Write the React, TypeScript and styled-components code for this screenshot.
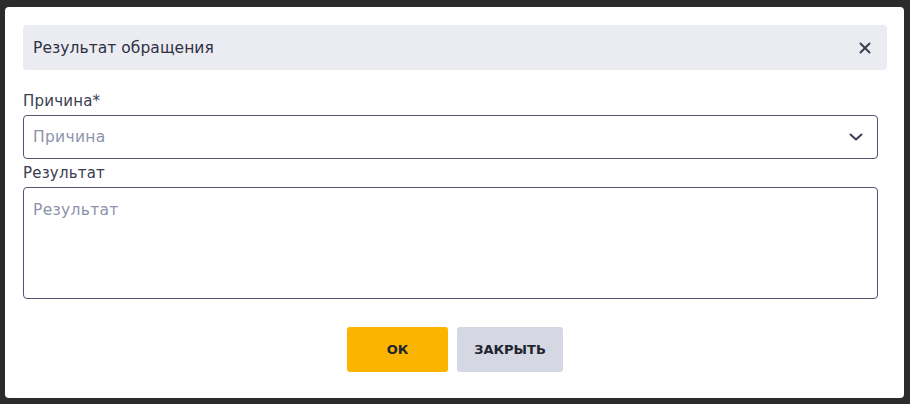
import React from "react";
import styled, { createGlobalStyle } from "styled-components";

const GlobalStyle = createGlobalStyle`
  html, body {
    margin: 0;
    padding: 0;
    background: #2b2b2b;
    font-family: "DejaVu Sans", "Noto Sans", sans-serif;
  }
  * {
    box-sizing: border-box;
  }
`;

function CloseIcon() {
  return (
    <svg width="12" height="12" viewBox="0 0 12 12" fill="none">
      <path d="M1.5 1.5L10.5 10.5M10.5 1.5L1.5 10.5" stroke="#3a3d52" strokeWidth="2" strokeLinecap="round" />
    </svg>
  );
}

function ChevronIcon() {
  return (
    <svg width="14" height="8" viewBox="0 0 14 8" fill="none">
      <path d="M1.5 1.5L7 6.5L12.5 1.5" stroke="#3a3d52" strokeWidth="2" strokeLinecap="round" strokeLinejoin="round" />
    </svg>
  );
}

function App() {
  return (
    <>
      <GlobalStyle />
      <Modal>
        <Header>
          <Title>Результат обращения</Title>
          <CloseButton aria-label="close">
            <CloseIcon />
          </CloseButton>
        </Header>
        <Form>
          <Field>
            <Label>Причина*</Label>
            <Select>
              <Placeholder>Причина</Placeholder>
              <ChevronIcon />
            </Select>
          </Field>
          <Field>
            <Label>Результат</Label>
            <TextArea placeholder="Результат" />
          </Field>
        </Form>
        <Actions>
          <Button variant="primary">ОК</Button>
          <Button variant="secondary">ЗАКРЫТЬ</Button>
        </Actions>
      </Modal>
    </>
  );
}

const Modal = styled.div`
  margin: 7px 0 0 5px;
  width: 899px;
  height: 391px;
  background: #fff;
  border-radius: 4px;
  padding: 18px 17px 0 18px;
  display: flex;
  flex-direction: column;
`;

const Header = styled.div`
  height: 45px;
  background: #ebecf2;
  border-radius: 4px;
  display: flex;
  align-items: center;
  justify-content: space-between;
  padding: 0 16px 0 10px;
`;

const Title = styled.span`
  font-size: 15.5px;
  letter-spacing: 0.05px;
  color: #2f3142;
`;

const CloseButton = styled.button`
  border: none;
  background: none;
  padding: 0;
  display: flex;
  cursor: pointer;
`;

const Form = styled.div`
  display: flex;
  flex-direction: column;
  gap: 4px;
  margin-top: 21px;
  padding-right: 9px;
`;

const Field = styled.div`
  display: flex;
  flex-direction: column;
  gap: 4px;
`;

const Label = styled.label`
  font-size: 15px;
  letter-spacing: 0.2px;
  line-height: 20px;
  color: #3a3d4f;
`;

const Select = styled.div`
  height: 44px;
  border: 1px solid #4f5570;
  border-radius: 4px;
  display: flex;
  align-items: center;
  justify-content: space-between;
  padding: 0 14px 0 9px;
`;

const Placeholder = styled.span`
  font-size: 15.5px;
  letter-spacing: 0.3px;
  color: #8d93ab;
`;

const TextArea = styled.textarea`
  height: 112px;
  border: 1px solid #4f5570;
  border-radius: 4px;
  padding: 13px 9px;
  font-family: inherit;
  font-size: 15.5px;
  letter-spacing: 0.3px;
  resize: none;
  outline: none;
  &::placeholder {
    color: #8d93ab;
  }
`;

const Actions = styled.div`
  display: flex;
  justify-content: center;
  gap: 9px;
  margin-top: 28px;
`;

const Button = styled.button<{ variant: "primary" | "secondary" }>`
  height: 45px;
  min-width: ${(p) => (p.variant === "primary" ? "101px" : "106px")};
  border: none;
  border-radius: 3px;
  font-family: inherit;
  font-size: 13px;
  font-weight: 600;
  color: #22242f;
  background: ${(p) => (p.variant === "primary" ? "#fbb500" : "#d5d8e2")};
  cursor: pointer;
`;

export default App;
